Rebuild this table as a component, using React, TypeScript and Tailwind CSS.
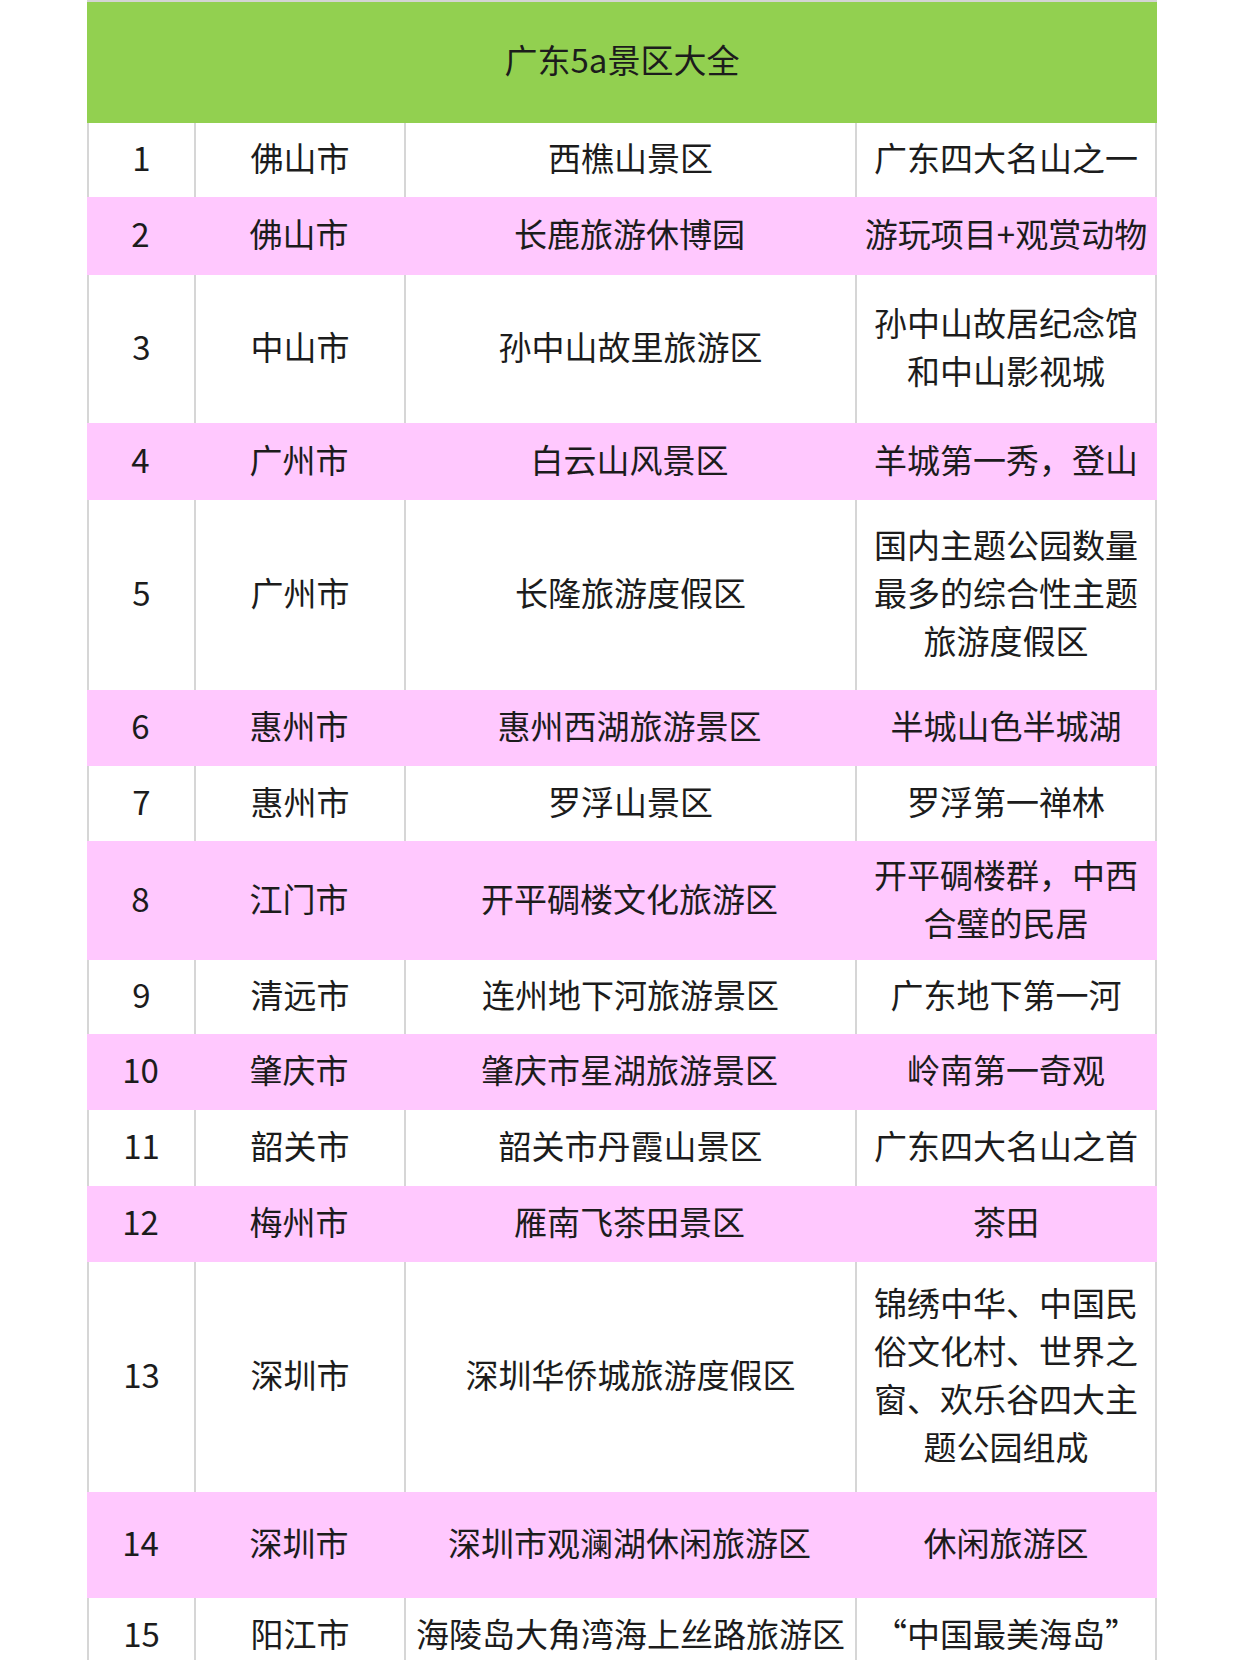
import React from "react";

type Row = { n: string; city: string; name: string; desc: string[]; h: string };

const rows: Row[] = [
  { n: "1", city: "佛山市", name: "西樵山景区", desc: ["广东四大名山之一"], h: "h-[74px]" },
  { n: "2", city: "佛山市", name: "长鹿旅游休博园", desc: ["游玩项目+观赏动物"], h: "h-[78px]" },
  { n: "3", city: "中山市", name: "孙中山故里旅游区", desc: ["孙中山故居纪念馆", "和中山影视城"], h: "h-[148px]" },
  { n: "4", city: "广州市", name: "白云山风景区", desc: ["羊城第一秀，登山"], h: "h-[77px]" },
  { n: "5", city: "广州市", name: "长隆旅游度假区", desc: ["国内主题公园数量", "最多的综合性主题", "旅游度假区"], h: "h-[190px]" },
  { n: "6", city: "惠州市", name: "惠州西湖旅游景区", desc: ["半城山色半城湖"], h: "h-[76px]" },
  { n: "7", city: "惠州市", name: "罗浮山景区", desc: ["罗浮第一禅林"], h: "h-[75px]" },
  { n: "8", city: "江门市", name: "开平碉楼文化旅游区", desc: ["开平碉楼群，中西", "合璧的民居"], h: "h-[119px]" },
  { n: "9", city: "清远市", name: "连州地下河旅游景区", desc: ["广东地下第一河"], h: "h-[74px]" },
  { n: "10", city: "肇庆市", name: "肇庆市星湖旅游景区", desc: ["岭南第一奇观"], h: "h-[76px]" },
  { n: "11", city: "韶关市", name: "韶关市丹霞山景区", desc: ["广东四大名山之首"], h: "h-[76px]" },
  { n: "12", city: "梅州市", name: "雁南飞茶田景区", desc: ["茶田"], h: "h-[76px]" },
  { n: "13", city: "深圳市", name: "深圳华侨城旅游度假区", desc: ["锦绣中华、中国民", "俗文化村、世界之", "窗、欢乐谷四大主", "题公园组成"], h: "h-[230px]" },
  { n: "14", city: "深圳市", name: "深圳市观澜湖休闲旅游区", desc: ["休闲旅游区"], h: "h-[106px]" },
  { n: "15", city: "阳江市", name: "海陵岛大角湾海上丝路旅游区", desc: ["“中国最美海岛”"], h: "h-[75px]" },
];

export default function App() {
  return (
    <div
      className="w-[1242px] h-[1660px] overflow-hidden bg-white text-[#1c1c1c] text-[33px] leading-[48px]"
      style={{ fontFamily: '"Noto Sans CJK SC", "Noto Sans", sans-serif' }}
    >
      <div className="ml-[87px] w-[1070px] flex flex-col">
        <div className="h-[123px] pb-[8px] border-t-2 border-[#d4d4d4] bg-[#92d050] flex items-center justify-center">
          广东5a景区大全
        </div>
        {rows.map((r, i) => {
          const pink = i % 2 === 1;
          const cell = pink
            ? "flex items-center justify-center text-center whitespace-nowrap pb-[6px]"
            : "flex items-center justify-center text-center whitespace-nowrap pb-[6px] border-l-2 border-[#d6d6d6]";
          return (
            <div
              key={r.n}
              className={`grid grid-cols-[107px_210px_451px_302px] ${r.h} ${pink ? "bg-[#ffc8fe]" : "bg-white"}`}
            >
              <div className={cell}>{r.n}</div>
              <div className={cell}>{r.city}</div>
              <div className={cell}>{r.name}</div>
              <div className={`${cell} flex-col ${pink ? "" : "border-r-2"}`}>
                {r.desc.map((d) => (
                  <span key={d}>{d}</span>
                ))}
              </div>
            </div>
          );
        })}
      </div>
    </div>
  );
}
